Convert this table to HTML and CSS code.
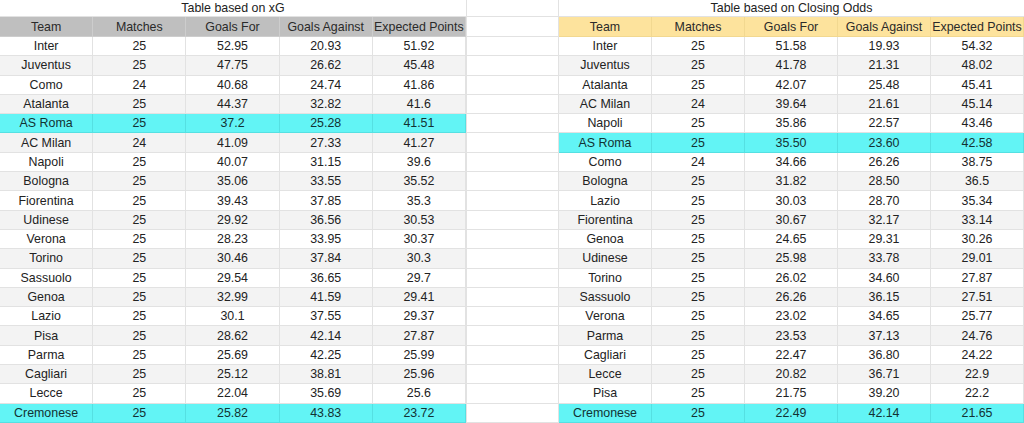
FILE: index.html
```html
<!DOCTYPE html>
<html>
<head>
<meta charset="utf-8">
<link rel="stylesheet" href="styles.css">
</head>
<body>
<div class="page">
  <section class="sheet left">
    <div class="title">Table based on xG</div>
    <div class="row head grey"><div>Team</div><div>Matches</div><div>Goals For</div><div>Goals Against</div><div>Expected Points</div></div>
    <div class="row"><div>Inter</div><div>25</div><div>52.95</div><div>20.93</div><div>51.92</div></div>
    <div class="row alt"><div>Juventus</div><div>25</div><div>47.75</div><div>26.62</div><div>45.48</div></div>
    <div class="row"><div>Como</div><div>24</div><div>40.68</div><div>24.74</div><div>41.86</div></div>
    <div class="row alt"><div>Atalanta</div><div>25</div><div>44.37</div><div>32.82</div><div>41.6</div></div>
    <div class="row hl"><div>AS Roma</div><div>25</div><div>37.2</div><div>25.28</div><div>41.51</div></div>
    <div class="row alt"><div>AC Milan</div><div>24</div><div>41.09</div><div>27.33</div><div>41.27</div></div>
    <div class="row"><div>Napoli</div><div>25</div><div>40.07</div><div>31.15</div><div>39.6</div></div>
    <div class="row alt"><div>Bologna</div><div>25</div><div>35.06</div><div>33.55</div><div>35.52</div></div>
    <div class="row"><div>Fiorentina</div><div>25</div><div>39.43</div><div>37.85</div><div>35.3</div></div>
    <div class="row alt"><div>Udinese</div><div>25</div><div>29.92</div><div>36.56</div><div>30.53</div></div>
    <div class="row"><div>Verona</div><div>25</div><div>28.23</div><div>33.95</div><div>30.37</div></div>
    <div class="row alt"><div>Torino</div><div>25</div><div>30.46</div><div>37.84</div><div>30.3</div></div>
    <div class="row"><div>Sassuolo</div><div>25</div><div>29.54</div><div>36.65</div><div>29.7</div></div>
    <div class="row alt"><div>Genoa</div><div>25</div><div>32.99</div><div>41.59</div><div>29.41</div></div>
    <div class="row"><div>Lazio</div><div>25</div><div>30.1</div><div>37.55</div><div>29.37</div></div>
    <div class="row alt"><div>Pisa</div><div>25</div><div>28.62</div><div>42.14</div><div>27.87</div></div>
    <div class="row"><div>Parma</div><div>25</div><div>25.69</div><div>42.25</div><div>25.99</div></div>
    <div class="row alt"><div>Cagliari</div><div>25</div><div>25.12</div><div>38.81</div><div>25.96</div></div>
    <div class="row"><div>Lecce</div><div>25</div><div>22.04</div><div>35.69</div><div>25.6</div></div>
    <div class="row hl"><div>Cremonese</div><div>25</div><div>25.82</div><div>43.83</div><div>23.72</div></div>
  </section>
  <section class="gap">
    <div class="title"></div>
    <div class="row head"><div></div></div>
    <div class="row"><div></div></div><div class="row"><div></div></div><div class="row"><div></div></div><div class="row"><div></div></div>
    <div class="row"><div></div></div><div class="row"><div></div></div><div class="row"><div></div></div><div class="row"><div></div></div>
    <div class="row"><div></div></div><div class="row"><div></div></div><div class="row"><div></div></div><div class="row"><div></div></div>
    <div class="row"><div></div></div><div class="row"><div></div></div><div class="row"><div></div></div><div class="row"><div></div></div>
    <div class="row"><div></div></div><div class="row"><div></div></div><div class="row"><div></div></div><div class="row"><div></div></div>
  </section>
  <section class="sheet right">
    <div class="title">Table based on Closing Odds</div>
    <div class="row head gold"><div>Team</div><div>Matches</div><div>Goals For</div><div>Goals Against</div><div>Expected Points</div></div>
    <div class="row"><div>Inter</div><div>25</div><div>51.58</div><div>19.93</div><div>54.32</div></div>
    <div class="row alt"><div>Juventus</div><div>25</div><div>41.78</div><div>21.31</div><div>48.02</div></div>
    <div class="row"><div>Atalanta</div><div>25</div><div>42.07</div><div>25.48</div><div>45.41</div></div>
    <div class="row alt"><div>AC Milan</div><div>24</div><div>39.64</div><div>21.61</div><div>45.14</div></div>
    <div class="row"><div>Napoli</div><div>25</div><div>35.86</div><div>22.57</div><div>43.46</div></div>
    <div class="row hl"><div>AS Roma</div><div>25</div><div>35.50</div><div>23.60</div><div>42.58</div></div>
    <div class="row"><div>Como</div><div>24</div><div>34.66</div><div>26.26</div><div>38.75</div></div>
    <div class="row alt"><div>Bologna</div><div>25</div><div>31.82</div><div>28.50</div><div>36.5</div></div>
    <div class="row"><div>Lazio</div><div>25</div><div>30.03</div><div>28.70</div><div>35.34</div></div>
    <div class="row alt"><div>Fiorentina</div><div>25</div><div>30.67</div><div>32.17</div><div>33.14</div></div>
    <div class="row"><div>Genoa</div><div>25</div><div>24.65</div><div>29.31</div><div>30.26</div></div>
    <div class="row alt"><div>Udinese</div><div>25</div><div>25.98</div><div>33.78</div><div>29.01</div></div>
    <div class="row"><div>Torino</div><div>25</div><div>26.02</div><div>34.60</div><div>27.87</div></div>
    <div class="row alt"><div>Sassuolo</div><div>25</div><div>26.26</div><div>36.15</div><div>27.51</div></div>
    <div class="row"><div>Verona</div><div>25</div><div>23.02</div><div>34.65</div><div>25.77</div></div>
    <div class="row alt"><div>Parma</div><div>25</div><div>23.53</div><div>37.13</div><div>24.76</div></div>
    <div class="row"><div>Cagliari</div><div>25</div><div>22.47</div><div>36.80</div><div>24.22</div></div>
    <div class="row alt"><div>Lecce</div><div>25</div><div>20.82</div><div>36.71</div><div>22.9</div></div>
    <div class="row"><div>Pisa</div><div>25</div><div>21.75</div><div>39.20</div><div>22.2</div></div>
    <div class="row hl"><div>Cremonese</div><div>25</div><div>22.49</div><div>42.14</div><div>21.65</div></div>
  </section>
</div>
</body>
</html>
```

FILE: styles.css
```css
html, body {
  margin: 0;
  padding: 0;
  background: #ffffff;
}
body {
  font-family: "Liberation Sans", Arial, sans-serif;
  font-size: 12.4px;
  color: #222222;
  width: 1024px;
  height: 423px;
  overflow: hidden;
}
.page {
  display: flex;
  align-items: flex-start;
}
.sheet.left { width: 466px; }
.gap { width: 93px; }
.sheet.right { width: 465px; }

.title {
  height: 17px;
  line-height: 16px;
  text-align: center;
  box-sizing: border-box;
  border-bottom: 1px solid #e2e2e2;
}
.gap .title {
  border-left: 1px solid #e2e2e2;
  border-right: 1px solid #e2e2e2;
}
.row {
  display: grid;
  grid-template-columns: repeat(5, 1fr);
  height: 19.3px;
  background: #ffffff;
}
.gap .row {
  grid-template-columns: 1fr;
}
.row.head { height: 20px; }
.row > div {
  display: flex;
  align-items: center;
  justify-content: center;
  box-sizing: border-box;
  border-right: 1px solid #e2e2e2;
  border-bottom: 1px solid #e2e2e2;
  white-space: nowrap;
  overflow: hidden;
}
.gap .row > div {
  border-left: 1px solid #e2e2e2;
}
.row.alt { background: #f3f3f3; }
.row.hl { background: #62f4f5; }
.row.hl > div { border-color: #55e0e2; color: #123233; }
.row.grey { background: #bfbfbf; }
.row.grey > div { border-color: #cdcdcd; }
.row.gold { background: #fde39d; }
.row.gold > div { border-color: #f2d890; }
.row.head > div { color: #2a2a2a; }
```
